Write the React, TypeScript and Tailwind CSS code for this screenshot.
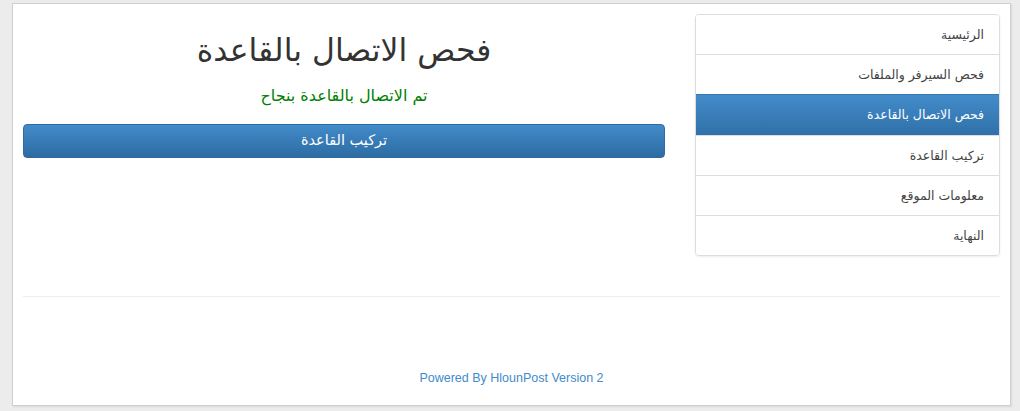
const menu = [
  { label: "الرئيسية" },
  { label: "فحص السيرفر والملفات" },
  { label: "فحص الاتصال بالقاعدة", active: true },
  { label: "تركيب القاعدة" },
  { label: "معلومات الموقع" },
  { label: "النهاية" },
];

const ar = { fontFamily: '"DejaVu Sans", "Liberation Sans", sans-serif' };

export default function App() {
  return (
    <div
      className="h-[411px] w-[1020px] overflow-hidden bg-[#ececec] pt-[3px] pl-[12px] pr-[9px] text-[#333]"
      style={{ fontFamily: '"Liberation Sans", "DejaVu Sans", sans-serif' }}
    >
      <div className="h-[403px] border border-[#cfcfcf] bg-white px-[10px] pt-[10px] shadow-[1px_1px_2px_rgba(0,0,0,0.08)]">
        <div dir="rtl" className="flex gap-[30px]" style={ar}>
          {/* Sidebar */}
          <div className="w-[305px] shrink-0">
            <div className="overflow-hidden rounded-[4px] border border-[#ddd] shadow-[0_1px_2px_rgba(0,0,0,0.075)]">
              {menu.map((m, i) => (
                <div
                  key={i}
                  className={
                    m.active
                      ? "h-[41px] border-t border-[#3278b3] bg-gradient-to-b from-[#428bca] to-[#3071a9] px-[15px] text-[12.5px] leading-[40px] text-white"
                      : "h-[40px] border-t border-[#ddd] bg-white px-[15px] text-[12.5px] leading-[40px] text-[#444] first:border-t-0 first:h-[39px] first:leading-[39px]"
                  }
                >
                  {m.label}
                </div>
              ))}
            </div>
          </div>

          {/* Main */}
          <div className="flex-1 text-center">
            <h1 className="mt-[20px] mb-[10px] text-[31.5px] leading-[33px] text-[#333]">
              فحص الاتصال بالقاعدة
            </h1>
            <p className="mt-[18px] text-[16px] leading-[22px] text-[#008000]">
              تم الاتصال بالقاعدة بنجاح
            </p>
            <button className="mt-[17px] h-[34px] w-full rounded-[4px] border border-[#2d6ca2] bg-gradient-to-b from-[#428bca] to-[#2d6ca2] text-[14.5px] text-white">
              تركيب القاعدة
            </button>
          </div>
        </div>

        <hr className="mt-[40px] border-t border-[#eee]" />

        <div className="mt-[72px] text-center text-[12.5px] text-[#428bca]">
          Powered By HlounPost Version 2
        </div>
      </div>
    </div>
  );
}
